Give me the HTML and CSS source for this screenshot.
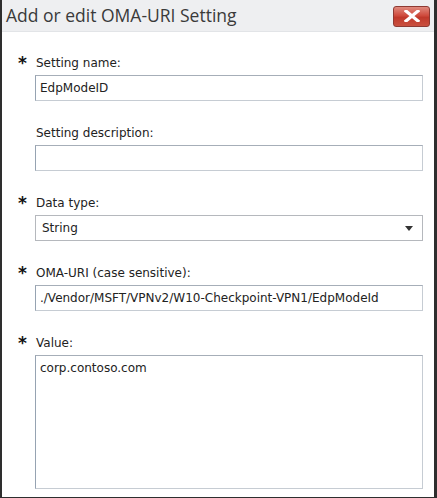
FILE: index.html
```html
<!DOCTYPE html>
<html>
<head>
<meta charset="utf-8">
<link rel="stylesheet" href="styles.css">
</head>
<body>
<div class="window">
  <div class="titlebar">
    <span class="title">Add or edit OMA-URI Setting</span>
    <span class="close">
      <svg width="16" height="12" viewBox="0 0 16 12"><path d="M2 1 L14 11 M14 1 L2 11" stroke="#fff" stroke-width="3.2" stroke-linecap="square"/></svg>
    </span>
  </div>
  <div class="content">
    <div class="field">
      <span class="req">*</span>
      <div class="body">
        <div class="label">Setting name:</div>
        <div class="box">EdpModeID</div>
      </div>
    </div>
    <div class="field">
      <span class="req"></span>
      <div class="body">
        <div class="label">Setting description:</div>
        <div class="box"></div>
      </div>
    </div>
    <div class="field">
      <span class="req">*</span>
      <div class="body">
        <div class="label">Data type:</div>
        <div class="box select"><span>String</span><span class="arrow"></span></div>
      </div>
    </div>
    <div class="field">
      <span class="req">*</span>
      <div class="body">
        <div class="label">OMA-URI (case sensitive):</div>
        <div class="box">./Vendor/MSFT/VPNv2/W10-Checkpoint-VPN1/EdpModeId</div>
      </div>
    </div>
    <div class="field last">
      <span class="req">*</span>
      <div class="body">
        <div class="label">Value:</div>
        <div class="box area">corp.contoso.com</div>
      </div>
    </div>
  </div>
</div>
</body>
</html>
```
FILE: styles.css
```css
html, body { margin: 0; padding: 0; background: #fff; }
.window {
  width: 437px; height: 498px; box-sizing: border-box;
  border-left: 2px solid #2e2e2e; border-right: 3px solid #2e2e2e; border-bottom: 1px solid #2e2e2e;
  display: flex; flex-direction: column; overflow: hidden;
}
.titlebar {
  height: 31px; flex: none; background: #eeeff1; border-bottom: 1px solid #e2e4e7;
  display: flex; align-items: center; justify-content: space-between;
  padding: 0 4px 0 4px;
}
.title {
  font-family: "Open Sans", sans-serif; font-size: 17.5px; color: #3a3a3a; margin-top: -1px;
}
.close {
  width: 37px; height: 21px; box-sizing: border-box; margin-top: 1px;
  border: 1px solid #8e3a33; border-radius: 3px;
  background: linear-gradient(#e08a7e, #cf4b3d 45%, #c0392b 55%, #c9503f);
  display: flex; align-items: center; justify-content: center;
}
.content {
  flex: 1; display: flex; flex-direction: column; gap: 25px;
  padding: 24px 11px 0 15px;
  font-family: "DejaVu Sans", sans-serif; font-size: 12px; color: #222;
}
.field { display: flex; }
.req {
  width: 17px; flex: none; font-family: "DejaVu Sans", sans-serif; font-weight: bold; font-size: 17px;
  line-height: 14px; color: #111; padding-left: 1px;
}
.body { flex: 1; display: flex; flex-direction: column; gap: 5px; }
.label { line-height: 14px; padding-left: 1px; }
.box {
  height: 26px; box-sizing: border-box;
  border: 1px solid; border-color: #a6aeb8 #c6ccd3 #c6ccd3 #96a3b2;
  padding: 0 4px; line-height: 24px; white-space: nowrap;
}
.select { display: flex; justify-content: space-between; align-items: center; border-color: #b5b8bd; padding-left: 6px; }
.arrow {
  width: 0; height: 0; border-left: 4px solid transparent; border-right: 4px solid transparent;
  border-top: 5px solid #333; margin-right: 5px;
}
.area { height: 134px; line-height: 16px; padding-top: 4px; }
```
